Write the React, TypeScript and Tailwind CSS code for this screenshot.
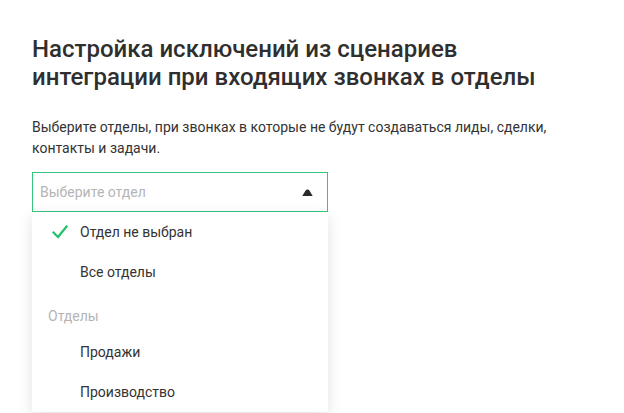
import { useState } from "react";

const departments = ["Продажи", "Производство"];

function CheckIcon() {
  return (
    <svg width="16" height="14" viewBox="0 0 16 14" fill="none">
      <path
        d="M1.5 7.5L6 12L14.5 1.5"
        stroke="#21c26b"
        strokeWidth="2.2"
        strokeLinecap="square"
      />
    </svg>
  );
}

function CaretUp() {
  return (
    <svg width="11" height="7" viewBox="0 0 11 7">
      <path d="M0.3 7L3.6 1.6C4.5 0.1 6.5 0.1 7.4 1.6L10.7 7Z" fill="#2b2b2b" />
    </svg>
  );
}

export default function App() {
  const [selected, setSelected] = useState("none");

  return (
    <div className="min-h-screen bg-white pl-8 pt-[35px] font-['Roboto',sans-serif] text-[#333]">
      <div className="w-[560px]">
        <h1 className="text-[24px] leading-[28px] font-medium text-[#2f2f2f]">
          Настройка исключений из сценариев
          <br />
          интеграции при входящих звонках в отделы
        </h1>
        <p className="mt-[26px] text-[14px] leading-[21px] text-[#333]">
          Выберите отделы, при звонках в которые не будут создаваться лиды, сделки,
          <br />
          контакты и задачи.
        </p>
      </div>

      <div className="relative mt-[13px] w-[296px]">
        <div className="flex h-10 items-center justify-between border border-[#34c77b] bg-white pl-[7px] pr-[14px]">
          <span className="text-[14px] text-[#b5b5b5]">Выберите отдел</span>
          <CaretUp />
        </div>

        <div className="absolute left-0 top-10 w-[296px] bg-white shadow-[0_4px_14px_rgba(0,0,0,0.12)]">
          <button
            onClick={() => setSelected("none")}
            className="flex h-10 w-full items-center text-left text-[14px]"
          >
            <span className="flex w-12 justify-end pr-[12px]">
              {selected === "none" && <CheckIcon />}
            </span>
            <span>Отдел не выбран</span>
          </button>
          <button
            onClick={() => setSelected("all")}
            className="flex h-10 w-full items-center text-left text-[14px]"
          >
            <span className="flex w-12 justify-end pr-[12px]">
              {selected === "all" && <CheckIcon />}
            </span>
            <span>Все отделы</span>
          </button>
          <div className="flex h-10 items-center pl-4 pt-2 text-[14px] text-[#b5b5b5]">
            Отделы
          </div>
          {departments.map((name) => (
            <button
              key={name}
              onClick={() => setSelected(name)}
              className="flex h-10 w-full items-center text-left text-[14px]"
            >
              <span className="flex w-12 justify-end pr-[12px]">
                {selected === name && <CheckIcon />}
              </span>
              <span>{name}</span>
            </button>
          ))}
        </div>
      </div>
    </div>
  );
}
